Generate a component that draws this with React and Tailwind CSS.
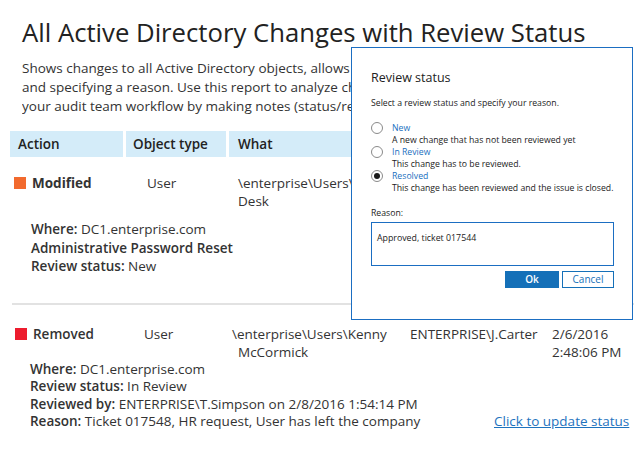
import React from 'react';

const blue = 'text-[#1a6fc0]';

const Radio = ({ checked }) => (
  <div className="flex h-[12px] w-[12px] shrink-0 items-center justify-center rounded-full border border-[#8a8a8a] bg-white">
    {checked && <div className="h-[6px] w-[6px] rounded-full bg-[#1a1a1a]" />}
  </div>
);

const options = [
  { label: 'New', desc: 'A new change that has not been reviewed yet' },
  { label: 'In Review', desc: 'This change has to be reviewed.' },
  { label: 'Resolved', desc: 'This change has been reviewed and the issue is closed.', checked: true },
];

const ReviewDialog = () => (
  <div className="absolute left-[351px] top-[47px] h-[273px] w-[282px] border border-[#1b6ec2] bg-white pl-[19px] pt-[22px] text-[#222]">
    <div className="text-[12.5px] leading-[16px]">Review status</div>
    <div className="mt-[10px] text-[8.7px] leading-[14px]">Select a review status and specify your reason.</div>
    <div className="mt-[12px] flex flex-col">
      {options.map((o) => (
        <div key={o.label} className="flex gap-[9px]">
          <Radio checked={o.checked} />
          <div className="whitespace-nowrap text-[8.7px] leading-[12px]">
            <div className={blue}>{o.label}</div>
            <div>{o.desc}</div>
          </div>
        </div>
      ))}
    </div>
    <div className="mt-[12px] text-[8.7px] leading-[14px]">Reason:</div>
    <div className="mt-[2px] h-[44px] w-[243px] border border-[#1b6ec2] pl-[5px] pt-[8px] text-[8.8px] leading-[14px]">
      Approved, ticket 017544
    </div>
    <div className="mt-[5px] flex w-[243px] justify-end gap-[3px]">
      <button className="h-[17px] w-[54px] bg-[#1570b8] text-[10px] font-semibold leading-[17px] text-white">Ok</button>
      <button className="h-[17px] w-[52px] border border-[#1570b8] bg-white text-[10px] leading-[15px] text-[#1570b8]">Cancel</button>
    </div>
  </div>
);

const Label = ({ children }) => <span className="font-semibold">{children}</span>;

export default function App() {
  return (
    <div className="relative h-[450px] w-[640px] overflow-hidden bg-white font-['Open_Sans',sans-serif] text-[#333]">
      <h1 className="whitespace-nowrap pl-[22px] pt-[16px] text-[25.7px] leading-[34px] text-[#222]">
        All Active Directory Changes with Review Status
      </h1>

      <div className="mt-[9px] ml-[22px] w-[600px] overflow-hidden whitespace-nowrap text-[13.5px] leading-[19px]">
        <div>Shows changes to all Active Directory objects, allows updating the review status of each change</div>
        <div>and specifying a reason. Use this report to analyze changes made to Active Directory and support</div>
        <div>your audit team workflow by making notes (status/reason) for every change.</div>
      </div>

      {/* header */}
      <div className="mt-[15px] ml-[10px] flex h-[26px] gap-[3px] text-[13.5px] font-semibold leading-[26px] text-[#222]">
        <div className="w-[113px] bg-[#d4ecf9] pl-[8px]">Action</div>
        <div className="w-[100px] bg-[#d4ecf9] pl-[7px]">Object type</div>
        <div className="w-[171px] bg-[#d4ecf9] pl-[9px]">What</div>
        <div className="w-[142px] bg-[#d4ecf9] pl-[7px]">Who</div>
        <div className="w-[80px] bg-[#d4ecf9] pl-[4px]">When</div>
      </div>

      {/* row 1 */}
      <div className="ml-[10px] flex pt-[17px] text-[13.5px] leading-[18px]">
        <div className="flex w-[116px] items-center gap-[6px] self-start pl-[4px]">
          <div className="h-[12px] w-[12px] bg-[#f26a2e]" />
          <span className="font-bold">Modified</span>
        </div>
        <div className="w-[103px] pl-[21px]">User</div>
        <div className="w-[174px] pl-[9px]">
          <div>\enterprise\Users\Help</div>
          <div>Desk</div>
        </div>
        <div className="w-[145px] pl-[7px]">ENTERPRISE\J.Carter</div>
        <div className="pl-[4px]">
          <div>2/5/2016</div>
          <div>9:12:44 AM</div>
        </div>
      </div>
      <div className="mt-[10px] pl-[31px] text-[13.5px] leading-[18.5px]">
        <div><Label>Where:</Label> DC1.enterprise.com</div>
        <div className="font-semibold">Administrative Password Reset</div>
        <div><Label>Review status:</Label> New</div>
      </div>

      <div className="ml-[12px] mt-[27px] h-[2px] w-[622px] bg-[#e2e2e2]" />

      {/* row 2 */}
      <div className="ml-[10px] flex pt-[20px] text-[13.5px] leading-[18.5px]">
        <div className="flex h-[18.5px] w-[116px] items-center gap-[6px] pl-[5px]">
          <div className="h-[12px] w-[12px] bg-[#ed1c2e]" />
          <span className="font-semibold">Removed</span>
        </div>
        <div className="w-[103px] pl-[18px]">User</div>
        <div className="w-[174px]">
          <div className="pl-[3px]">\enterprise\Users\Kenny</div>
          <div className="pl-[9px]">McCormick</div>
        </div>
        <div className="w-[145px] pl-[7px]">ENTERPRISE\J.Carter</div>
        <div className="pl-[4px]">
          <div>2/6/2016</div>
          <div>2:48:06 PM</div>
        </div>
      </div>
      <div className="-mt-[1px] pl-[30px] text-[13.5px] leading-[17.5px]">
        <div><Label>Where:</Label> DC1.enterprise.com</div>
        <div><Label>Review status:</Label> In Review</div>
        <div><Label>Reviewed by:</Label> ENTERPRISE\T.Simpson on 2/8/2016 1:54:14 PM</div>
        <div className="flex">
          <div className="w-[464px]"><Label>Reason:</Label> Ticket 017548, HR request, User has left the company</div>
          <a className="text-[#1e73be] underline">Click to update status</a>
        </div>
      </div>

      <ReviewDialog />
    </div>
  );
}
